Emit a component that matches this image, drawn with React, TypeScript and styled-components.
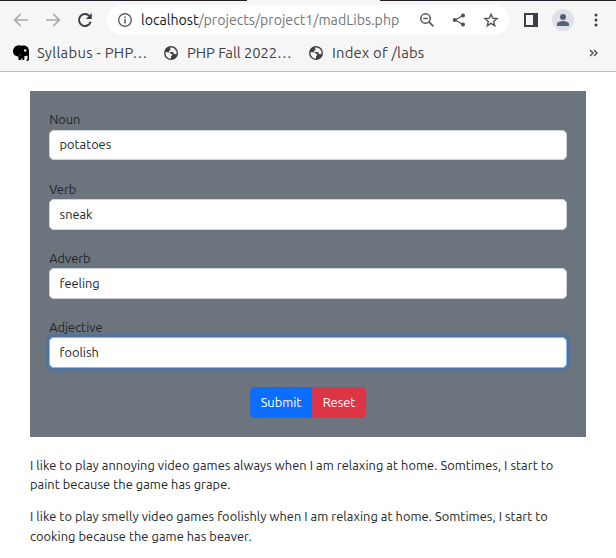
import React from "react";
import styled, { createGlobalStyle } from "styled-components";

const GlobalStyle = createGlobalStyle`
  *, *::before, *::after { box-sizing: border-box; }
  html, body { margin: 0; background: #fff; overflow: hidden; }
  body { font-family: Ubuntu, "Noto Sans", sans-serif; }
`;

const Chrome = styled.header`
  height: 72px;
  background: #f6f6f6;
  border-bottom: 1px solid #bcbcbc;
`;
const TabEdge = styled.div`
  display: flex;
  justify-content: space-between;
  height: 1px;
`;
const TabEdgePart = styled.span<{ $width: number }>`
  width: ${(p) => p.$width}px;
  background: #241f26;
`;
const Toolbar = styled.div`
  display: flex;
  align-items: center;
  height: 30px;
  margin-top: 4px;
  padding-left: 12px;
`;
const ToolIcon = styled.span<{ $w: number; $gap?: number; $color?: string }>`
  display: flex;
  flex: none;
  width: ${(p) => p.$w}px;
  margin-left: ${(p) => p.$gap ?? 0}px;
  color: ${(p) => p.$color ?? "#3c4043"};
  svg { display: block; }
`;
const AddressBar = styled.div`
  display: flex;
  align-items: center;
  flex: none;
  width: 402px;
  height: 30px;
  margin-left: 14px;
  padding-left: 9px;
  border-radius: 15px;
  background: #fff;
`;
const Url = styled.span`
  flex: none;
  width: 261px;
  margin-left: 8px;
  font-size: 14.2px;
  line-height: 20px;
  letter-spacing: -0.03px;
  white-space: nowrap;
  color: #73777c;
`;
const Host = styled.span`
  color: #17181b;
`;
const Avatar = styled.span`
  display: grid;
  place-items: center;
  width: 22px;
  height: 22px;
  margin-left: 14px;
  border-radius: 50%;
  background: #dee1e6;
`;
const Bookmarks = styled.nav`
  display: flex;
  align-items: center;
  height: 36px;
  padding-left: 13px;
`;
const Bookmark = styled.a<{ $w: number; $spacing: number }>`
  display: flex;
  align-items: center;
  flex: none;
  gap: 8px;
  width: ${(p) => p.$w}px;
  font-size: 14.8px;
  line-height: 20px;
  letter-spacing: ${(p) => p.$spacing}px;
  white-space: nowrap;
  color: #3f4145;
  svg { flex: none; }
`;

const Page = styled.main`
  padding: 19.2px 30px 0;
  font-size: 12.8px;
  line-height: 19.2px;
  color: #212529;
`;
const Form = styled.form`
  padding: 19.2px;
  background: #6c757d;
`;
const Field = styled.label`
  display: block;
  margin-bottom: 19.2px;
`;
const Caption = styled.span`
  display: block;
`;
const Input = styled.input<{ $focused?: boolean }>`
  display: block;
  width: 100%;
  height: 30.8px;
  padding: 4.3px 9.4px 5.3px;
  border: 1px solid ${(p) => (p.$focused ? "#86b7fe" : "#ced4da")};
  border-radius: 4.8px;
  outline: none;
  background: #fff;
  box-shadow: ${(p) => (p.$focused ? "0 0 0 3.2px rgba(13, 110, 253, 0.25)" : "none")};
  color: #212529;
  font: inherit;
`;
const ButtonGroup = styled.div`
  display: flex;
  justify-content: center;
  height: 30.8px;
`;
const Button = styled.button<{ $kind: "primary" | "danger" }>`
  width: ${(p) => (p.$kind === "primary" ? 62 : 54)}px;
  padding: 0;
  border: 0;
  border-radius: ${(p) => (p.$kind === "primary" ? "4.8px 0 0 4.8px" : "0 4.8px 4.8px 0")};
  background: ${(p) => (p.$kind === "primary" ? "#0d6efd" : "#dc3545")};
  color: #fff;
  font: inherit;
`;
const Story = styled.p<{ $top: number }>`
  margin: ${(p) => p.$top}px 0 0;
  letter-spacing: 0.06px;
  white-space: nowrap;
`;

const Arrow = ({ flip = false }: { flip?: boolean }) => (
  <svg width="16" height="16" viewBox="0 0 16 16" fill="none" stroke="currentColor" strokeWidth="1.7">
    <path d={flip ? "M1 8h13M8.3 2l6 6-6 6" : "M15 8H2M7.7 2l-6 6 6 6"} />
  </svg>
);

const Globe = () => (
  <svg width="16" height="16" viewBox="0 0 16 16">
    <circle cx="8" cy="8" r="7" fill="#3f4145" />
    <path
      d="M2.4 7.2h3.3c1.3 0 1.6.7 2 1.2.5.5 1.6.2 1.600 1.300 0 1-1.300.9-1.300 1.900v2C4.600 13.600 2.200 10.800 2.400 7.200zM7.400 2.500c2.600-.3 5 1.200 5.900 3.600.3.900.4 1.600.3 2.500-.9.900-2.600.8-3-.2-.3-.9-.5-1.400-1.700-1.400H6.700c-1 0-1-1.200-.1-1.500.8-.2 1-.5.9-1.100-.1-.7-.9-1-.1-1.900z"
      fill="#f6f6f6"
    />
  </svg>
);

const Elephant = () => (
  <svg width="16" height="16" viewBox="0 0 16 16">
    <path d="M5 .5C6.500-.2 7.500.2 8.500.8 10 .1 12.500.2 14.200 1.700 15.700 3 16 5 16 7v7.200c0 1.200-.8 1.800-2.500 1.800v-1.200c.7 0 1-.3 1-1v-3l-3 .3-.3 3.900H9.500L9 12.500 8 15H5.500l-.2-3.400C2 11.300 0 9.500 0 6.600 0 3.300 2 .8 5 .5z" fill="#000" />
    <circle cx="12.200" cy="5.400" r="1.200" fill="#fff" />
    <path d="M5.800 10.200c1.500 0 2.200-.4 2.500-1.200" fill="none" stroke="#777" strokeWidth=".6" />
  </svg>
);

const fields = [
  { label: "Noun", value: "potatoes" },
  { label: "Verb", value: "sneak" },
  { label: "Adverb", value: "feeling" },
  { label: "Adjective", value: "foolish", focused: true },
];

export default function App() {
  return (
    <>
      <GlobalStyle />
      <Chrome>
        <TabEdge>
          <TabEdgePart $width={247} />
          <TabEdgePart $width={236} />
        </TabEdge>
        <Toolbar>
          <ToolIcon $w={16} $gap={1} $color="#a8a8a8"><Arrow /></ToolIcon>
          <ToolIcon $w={16} $gap={16} $color="#a8a8a8"><Arrow flip /></ToolIcon>
          <ToolIcon $w={16} $gap={16}>
            <svg width="16" height="16" viewBox="0 0 16 16">
              <path d="M13.700 9.800A6 6 0 1 1 12.400 3.900" fill="none" stroke="currentColor" strokeWidth="2" />
              <path d="M14.800 1v6H8.800z" fill="currentColor" />
            </svg>
          </ToolIcon>
          <AddressBar>
            <ToolIcon $w={16} $gap={1} $color="#5f6368">
              <svg width="16" height="16" viewBox="0 0 16 16" fill="none" stroke="currentColor" strokeWidth="1.400">
                <circle cx="8" cy="8" r="6.300" />
                <path d="M8 7v4.500M8 4.400v1.600" strokeWidth="1.600" />
              </svg>
            </ToolIcon>
            <Url><Host>localhost</Host>/projects/project1/madLibs.php</Url>
            <ToolIcon $w={16} $gap={17} $color="#505357">
              <svg width="16" height="16" viewBox="0 0 16 16" fill="none" stroke="currentColor" strokeWidth="1.500">
                <circle cx="6.500" cy="6.500" r="4.700" />
                <path d="M9.900 9.900l4.500 4.500M4.300 6.500h4.400" />
              </svg>
            </ToolIcon>
            <ToolIcon $w={16} $gap={16} $color="#505357">
              <svg width="16" height="16" viewBox="0 0 16 16" fill="currentColor">
                <path d="M12 3.500L4 8l8 4.500" fill="none" stroke="currentColor" strokeWidth="1.300" />
                <circle cx="12" cy="3.500" r="2" /><circle cx="3.700" cy="8" r="2" /><circle cx="12" cy="12.500" r="2" />
              </svg>
            </ToolIcon>
            <ToolIcon $w={16} $gap={16} $color="#505357">
              <svg width="16" height="16" viewBox="0 0 16 16" fill="none" stroke="currentColor" strokeWidth="1.400">
                <path d="M8 2.200l1.700 4 4.300.4-3.300 2.800 1 4.300L8 11.400l-3.700 2.300 1-4.300L2 6.600l4.300-.4z" />
              </svg>
            </ToolIcon>
          </AddressBar>
          <ToolIcon $w={14} $gap={15}>
            <svg width="14" height="14" viewBox="0 0 14 14">
              <path d="M0 0h14v14H0zM2 2v10h7V2z" fill="currentColor" fillRule="evenodd" />
            </svg>
          </ToolIcon>
          <Avatar>
            <svg width="12" height="12" viewBox="0 0 12 12" fill="#536078">
              <circle cx="6" cy="3" r="3" /><path d="M0 12v-2c0-2 3.800-3 6-3s6 1 6 3v2z" />
            </svg>
          </Avatar>
          <ToolIcon $w={4} $gap={20}>
            <svg width="4" height="14" viewBox="0 0 4 14" fill="currentColor">
              <circle cx="2" cy="2" r="1.500" /><circle cx="2" cy="7" r="1.500" /><circle cx="2" cy="12" r="1.500" />
            </svg>
          </ToolIcon>
        </Toolbar>
        <Bookmarks>
          <Bookmark $w={150} $spacing={0.28}><Elephant />Syllabus - PHP…</Bookmark>
          <Bookmark $w={145} $spacing={-0.05}><Globe />PHP Fall 2022…</Bookmark>
          <Bookmark $w={281} $spacing={0.2}><Globe />Index of /labs</Bookmark>
          <svg width="9" height="8" viewBox="0 0 9 8" fill="none" stroke="#505357" strokeWidth="1.500">
            <path d="M1 1l3 3-3 3M5 1l3 3-3 3" />
          </svg>
        </Bookmarks>
      </Chrome>
      <Page>
        <Form onSubmit={(e) => e.preventDefault()}>
          {fields.map((f) => (
            <Field key={f.label}>
              <Caption>{f.label}</Caption>
              <Input defaultValue={f.value} $focused={f.focused} />
            </Field>
          ))}
          <ButtonGroup>
            <Button type="submit" $kind="primary">Submit</Button>
            <Button type="reset" $kind="danger">Reset</Button>
          </ButtonGroup>
        </Form>
        <Story $top={19}>
          I like to play annoying video games always when I am relaxing at home. Somtimes, I start to
          <br />
          paint because the game has grape.
        </Story>
        <Story $top={12.8}>
          I like to play smelly video games foolishly when I am relaxing at home. Somtimes, I start to
          <br />
          cooking because the game has beaver.
        </Story>
      </Page>
    </>
  );
}
